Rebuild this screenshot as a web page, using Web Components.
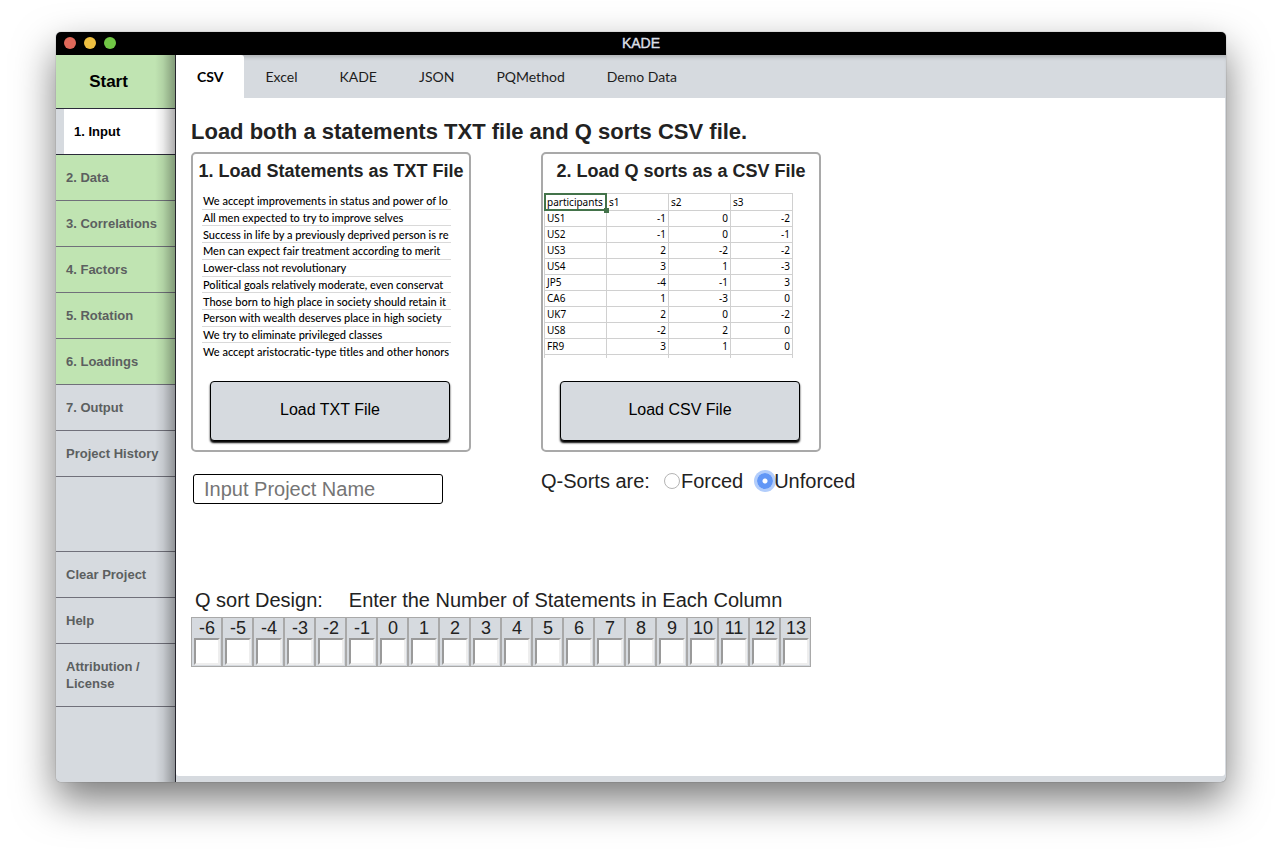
<!DOCTYPE html>
<html lang="en">
<head>
<meta charset="utf-8">
<title>KADE</title>
<style>
  html, body { margin: 0; background: #fff; }
  body {
    box-sizing: border-box;
    min-height: 100vh;
    padding: 32px 56px 80px;
    font-family: "Liberation Sans", Arial, sans-serif;
    color: #222;
    --bar: #d6dadf;
    --ready: #c0e4b2;
    --line: #a9a9a9;
  }
</style>
</head>
<body>
<kade-window>
  <title-bar slot="title">KADE</title-bar>
  <side-bar slot="side">
    <side-item kind="start">Start</side-item>
    <side-item kind="current">1. Input</side-item>
    <side-item kind="ready">2. Data</side-item>
    <side-item kind="ready">3. Correlations</side-item>
    <side-item kind="ready">4. Factors</side-item>
    <side-item kind="ready">5. Rotation</side-item>
    <side-item kind="ready">6. Loadings</side-item>
    <side-item>7. Output</side-item>
    <side-item>Project History</side-item>
    <side-item kind="spacer"></side-item>
    <side-item>Clear Project</side-item>
    <side-item>Help</side-item>
    <side-item>Attribution / License</side-item>
  </side-bar>
  <tab-bar slot="tabs" tabs="CSV,Excel,KADE,JSON,PQMethod,Demo Data"></tab-bar>
  <csv-panel>
    <span slot="heading">Load both a statements TXT file and Q sorts CSV file.</span>
    <load-card slot="cards" action="Load TXT File">
      <span slot="title">1. Load Statements as TXT File</span>
      <statement-list></statement-list>
    </load-card>
    <load-card slot="cards" action="Load CSV File">
      <span slot="title">2. Load Q sorts as a CSV File</span>
      <sort-sheet></sort-sheet>
    </load-card>
    <project-name slot="options"></project-name>
    <sort-type slot="options"></sort-type>
    <sort-design slot="design" from="-6" to="13"></sort-design>
  </csv-panel>
</kade-window>

<script>
class Base extends HTMLElement {
  connectedCallback() {
    if (this.shadowRoot) return;
    this.attachShadow({ mode: "open" }).innerHTML =
      `<style>*{box-sizing:border-box}${this.css()}</style>${this.html()}`;
  }
}

customElements.define("kade-window", class extends Base {
  css() { return `
    :host { display: grid; grid-template: 23px auto 1fr / 120px minmax(0, 1fr);
      min-height: calc(100vh - 112px); box-sizing: border-box;
      background: var(--bar); border-radius: 5px; overflow: hidden;
      box-shadow: 0 0 1px rgba(0,0,0,.6), 0 18px 40px rgba(0,0,0,.53); }
    .title { grid-column: 1 / 3; }
    .side { grid-row: 2 / 4; display: grid; }
    .tabs { min-width: 0; box-shadow: inset 0 4px 4px -2px rgba(0,0,0,.2); }
    main { background: #fff; margin: 0 1px 6px 0; border-radius: 0 0 3px 3px; }`; }
  html() { return `
    <div class="title"><slot name="title"></slot></div>
    <div class="side"><slot name="side"></slot></div>
    <div class="tabs"><slot name="tabs"></slot></div>
    <main><slot></slot></main>`; }
});

customElements.define("title-bar", class extends Base {
  css() { return `
    :host { display: grid; grid-template-columns: 1fr auto 1fr; align-items: start;
      height: 23px; padding: 0 8px; box-sizing: border-box; background: #000; color: #dcdfe6; font-size: 14px; line-height: 22px; }
    .lights { display: flex; gap: 8px; padding-top: 5px; }
    i { width: 12px; height: 12px; border-radius: 50%; background: #e0695a; }
    i:nth-child(2) { background: #efc041; }
    i:nth-child(3) { background: #71c745; }
    b { font-weight: 400; -webkit-text-stroke: 0.4px; }`; }
  html() { return `<div class="lights"><i></i><i></i><i></i></div><b><slot></slot></b>`; }
});

customElements.define("side-bar", class extends Base {
  css() { return `
    :host { display: block; position: relative; background: var(--bar); border-right: 1px solid #26262e; }
    :host::after { content: ""; position: absolute; inset: 0 0 0 auto; width: 20px; pointer-events: none;
      background: linear-gradient(to right, rgba(0,0,0,0), rgba(0,0,0,.08) 40%, rgba(0,0,0,.32)); }
    nav { display: flex; flex-direction: column; }`; }
  html() { return `<nav><slot></slot></nav>`; }
});

customElements.define("side-item", class extends Base {
  css() { return `
    :host { display: block; border-bottom: 1px solid #70707a; font-weight: 700; font-size: 13px; line-height: 17px; color: #5c5f60; }
    :host([kind=ready]) { background: var(--ready); }
    :host([kind=start]) { background: var(--ready); font-size: 17px; color: #000; border-color: #2b2b3a; }
    :host([kind=current]) { color: #000; border-color: #2b2b3a; }
    a { display: block; padding: 14px 16px 14px 10px; color: inherit; text-decoration: none; }
    :host([kind=start]) a { padding: 18px 14px 18px 0; text-align: center; }
    :host([kind=current]) a { margin-left: 8px; background: #fff; }
    .gap { height: 74px; }`; }
  html() {
    return this.getAttribute("kind") === "spacer"
      ? `<div class="gap"></div>` : `<a href="#"><slot></slot></a>`;
  }
});

customElements.define("tab-bar", class extends Base {
  css() { return `
    :host { display: block; }
    div { display: flex; }
    button { height: 43px; padding: 0 21px; border: 0; background: none; color: #1d1d1d;
      font: 400 14px/43px Lato, sans-serif; }
    button[aria-selected=true] { background: #fff; color: #000; font-weight: 700; border-radius: 0 3px 0 0; }`; }
  html() {
    return `<div role="tablist">${this.getAttribute("tabs").split(",").map((t, i) =>
      `<button role="tab" aria-selected="${i === 0}">${t}</button>`).join("")}</div>`;
  }
});

customElements.define("csv-panel", class extends Base {
  css() { return `
    :host { display: block; padding: 18px 15px 16px; }
    h1 { margin: 0 0 4px; font-size: 22px; line-height: 32px; }
    .row { display: grid; grid-template-columns: 280px auto; justify-content: start; column-gap: 70px; }
    .options { margin: 18px 0 84px; align-items: start; }`; }
  html() { return `
    <h1><slot name="heading"></slot></h1>
    <div class="row"><slot name="cards"></slot></div>
    <div class="row options"><slot name="options"></slot></div>
    <slot name="design"></slot>`; }
});

customElements.define("load-card", class extends Base {
  css() { return `
    :host { display: flex; flex-direction: column; width: 280px; height: 300px; box-sizing: border-box;
      border: 2px solid var(--line); border-radius: 5px; }
    h2 { margin: 6px 0 11px; font-size: 18px; line-height: 22px; text-align: center; white-space: nowrap; }
    .preview { flex: 1; }
    button { width: 240px; height: 60px; margin: 0 auto 9px 17px; border: 1px solid #000; border-radius: 4px;
      background: var(--bar); color: #000; box-shadow: 0 2px 2px #000; padding: 0 0 2px;
      font: 16px/20px "Liberation Sans", Arial, sans-serif; }`; }
  html() { return `
    <h2><slot name="title"></slot></h2>
    <div class="preview"><slot></slot></div>
    <button>${this.getAttribute("action")}</button>`; }
});

customElements.define("statement-list", class extends Base {
  css() { return `
    :host { display: block; margin-left: 9px; width: 249px; }
    ul { display: grid; grid-auto-rows: 1fr; height: 167px; margin: 0; padding: 0; list-style: none; }
    li { display: flex; align-items: center; padding-left: 1px; white-space: nowrap;
      border-bottom: 1px solid #d9d9d9; color: #000; font: 500 11px/15px Lato, sans-serif; }
    li:last-child { border-color: transparent; }`; }
  html() {
    return `<ul>${[
      "We accept improvements in status and power of lo",
      "All men expected to try to improve selves",
      "Success in life by a previously deprived person is re",
      "Men can expect fair treatment according to merit",
      "Lower-class not revolutionary",
      "Political goals relatively moderate, even conservat",
      "Those born to high place in society should retain it",
      "Person with wealth deserves place in high society",
      "We try to eliminate privileged classes",
      "We accept aristocratic-type titles and other honors"
    ].map(t => `<li>${t}</li>`).join("")}</ul>`;
  }
});

customElements.define("sort-sheet", class extends Base {
  css() { return `
    :host { display: block; margin-left: 1px; }
    table { width: 249px; table-layout: fixed; border-collapse: collapse; color: #000; font: 10px/15px "Noto Sans", sans-serif; }
    th, td { height: 16px; padding: 0 2px; border: 1px solid #d0d0d0; font-weight: 400; text-align: right; white-space: nowrap; }
    th { text-align: left; }
    thead th { height: 17px; }
    tfoot td { height: 3px; line-height: 2px; border-bottom: 0; }
    .pick { position: relative; padding: 0 2px; }
    .pick::before { content: ""; position: absolute; inset: -1px; border: 2px solid #43734a; }
    .pick::after { content: ""; position: absolute; right: -3px; bottom: -3px; width: 5px; height: 5px; background: #43734a; }`; }
  html() {
    const rows = [["US1",-1,0,-2],["US2",-1,0,-1],["US3",2,-2,-2],["US4",3,1,-3],["JP5",-4,-1,3],
      ["CA6",1,-3,0],["UK7",2,0,-2],["US8",-2,2,0],["FR9",3,1,0]];
    return `<table><thead><tr><th class="pick">participants</th><th>s1</th><th>s2</th><th>s3</th></tr></thead><tbody>${
      rows.map(([n, ...v]) => `<tr><th>${n}</th>${v.map(x => `<td>${x}</td>`).join("")}</tr>`).join("")
    }</tbody><tfoot><tr><td></td><td></td><td></td><td></td></tr></tfoot></table>`;
  }
});

customElements.define("project-name", class extends Base {
  css() { return `
    :host { display: block; padding: 4px 0 0 2px; }
    input { display: block; width: 250px; height: 30px; padding: 0 10px; border: 1px solid #000; border-radius: 3px;
      background: #fff; font: 20px/24px "Liberation Sans", Arial, sans-serif; }
    input::placeholder { color: #757575; }`; }
  html() { return `<input type="text" aria-label="Project name" placeholder="Input Project Name">`; }
});

customElements.define("sort-type", class extends Base {
  css() { return `
    :host { display: block; }
    form { display: flex; align-items: center; height: 22px; font-size: 20px; line-height: 22px; white-space: nowrap; }
    label { display: flex; align-items: center; }
    .first { margin: 0 14px; }
    input { appearance: none; width: 16px; height: 16px; margin: 0 1px 0 0; border: 1px solid #b4b4b4; border-radius: 50%; background: #fff; }
    input:checked { border: 0; background: radial-gradient(circle, #fff 2px, #6297f6 3px); box-shadow: 0 0 0 3px #b2cdfb; }`; }
  html() { return `<form><span>Q-Sorts are:</span>
    <label class="first"><input type="radio" name="type">Forced</label>
    <label><input type="radio" name="type" checked>Unforced</label></form>`; }
});

customElements.define("sort-design", class extends Base {
  css() { return `
    :host { display: block; }
    p { display: flex; gap: 26px; margin: 0 0 5px 4px; font-size: 20px; line-height: 24px; }
    div { display: flex; }
    label { display: flex; flex-direction: column; width: 31px; height: 50px; padding: 0 2px;
      background: var(--bar); border: 1px solid var(--line); font-size: 18px; line-height: 20px; text-align: center; color: #222; }
    label span { padding-left: 1px; white-space: nowrap; }
    input { width: 26px; height: 27px; padding: 0; border: 2px solid; border-color: #9a9a9a #eee #eee #9a9a9a; background: #fff; }`; }
  html() {
    const cells = [];
    for (let n = +this.getAttribute("from"); n <= +this.getAttribute("to"); n++)
      cells.push(`<label><span>${n}</span><input type="text"></label>`);
    return `<p><span>Q sort Design:</span><span>Enter the Number of Statements in Each Column</span></p><div>${cells.join("")}</div>`;
  }
});
</script>
</body>
</html>
